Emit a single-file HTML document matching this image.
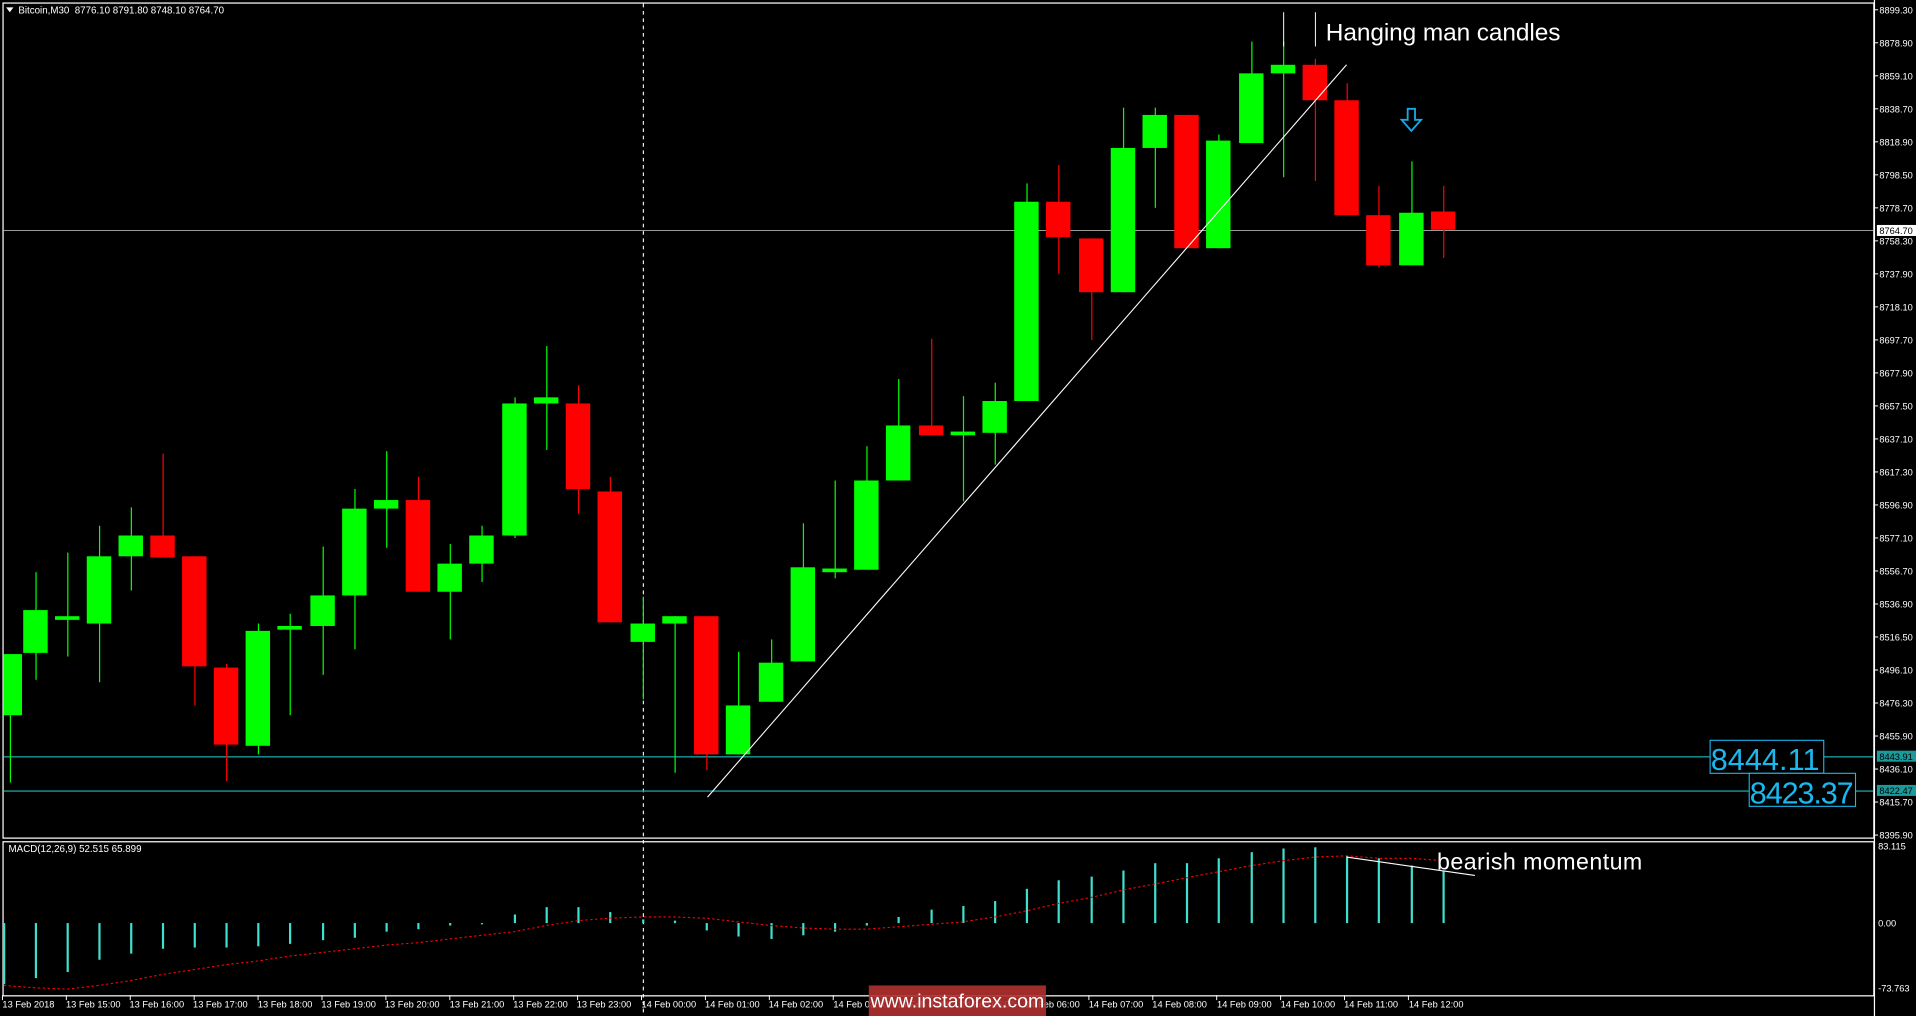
<!DOCTYPE html>
<html><head><meta charset="utf-8"><style>
html,body{margin:0;padding:0;background:#000;width:1916px;height:1016px;overflow:hidden}
svg{display:block}
text{font-family:"Liberation Sans",sans-serif}
</style></head><body>
<svg id="s" width="1916" height="1016" viewBox="0 0 1568 831" preserveAspectRatio="none" xmlns="http://www.w3.org/2000/svg">
<rect width="1568" height="831" fill="#000"/>
<rect x="2.5" y="2.5" width="1531" height="683" fill="none" stroke="#fff" stroke-width="1"/>
<rect x="2.5" y="688.5" width="1531" height="126" fill="none" stroke="#fff" stroke-width="1"/>
<line x1="526.5" y1="3" x2="526.5" y2="831" stroke="#fff" stroke-width="0.9" stroke-dasharray="3,3"/>
<line x1="3" y1="188.5" x2="1533" y2="188.5" stroke="#9a9a9a" stroke-width="0.8"/>
<line x1="3" y1="619" x2="1533" y2="619" stroke="#1a9a9a" stroke-width="1.1"/>
<line x1="3" y1="647" x2="1533" y2="647" stroke="#1a9a9a" stroke-width="1.1"/>
<g id="candles"></g>
<g id="hist"></g>
<polyline id="sig" fill="none" stroke="#ff0000" stroke-width="0.9" stroke-dasharray="2,2"/>
<line x1="579" y1="652" x2="1102" y2="53" stroke="#fff" stroke-width="0.9"/>
<line x1="1102" y1="701" x2="1207" y2="716" stroke="#fff" stroke-width="0.9"/>
<line x1="1050.5" y1="10" x2="1050.5" y2="38" stroke="#fff" stroke-width="0.8"/>
<line x1="1076.5" y1="10" x2="1076.5" y2="38" stroke="#fff" stroke-width="0.8"/>
<text x="1085" y="33" fill="#fff" font-size="20" textLength="192">Hanging man candles</text>
<text x="1176" y="711" fill="#fff" font-size="19" textLength="168">bearish momentum</text>
<path d="M1152,89 h6 v9 h5 l-8,9 l-8,-9 h5 z" fill="none" stroke="#19a8e8" stroke-width="1.5"/>
<path d="M5,6 h6 l-3,4 z" fill="#fff"/>
<text x="15" y="11" fill="#fff" font-size="8">Bitcoin,M30&#160; 8776.10 8791.80 8748.10 8764.70</text>
<text x="7" y="697" fill="#fff" font-size="8">MACD(12,26,9) 52.515 65.899</text>
<rect x="1399.5" y="605.5" width="93" height="27" fill="#000" stroke="#19b8f0" stroke-width="0.9"/>
<text x="1400" y="630" fill="#19b8f0" font-size="25" textLength="89">8444.11</text>
<rect x="1431.5" y="632.5" width="87" height="27" fill="#000" stroke="#19b8f0" stroke-width="0.9"/>
<text x="1432" y="657" fill="#19b8f0" font-size="25" textLength="85">8423.37</text>
<line x1="1534" y1="0" x2="1534" y2="831" stroke="#fff" stroke-width="1"/>
<g id="ax" fill="#fff" font-size="7.6"></g>
<rect x="1536" y="184" width="32" height="9" fill="#fff"/>
<text x="1538" y="191.5" fill="#000" font-size="7.6">8764.70</text>
<rect x="1536" y="614" width="32" height="9" fill="#1a9a9a"/>
<text x="1538" y="621.5" fill="#000" font-size="7.6">8443.91</text>
<rect x="1536" y="642" width="32" height="9" fill="#1a9a9a"/>
<text x="1538" y="649.5" fill="#000" font-size="7.6">8422.47</text>
<text x="1537" y="695" fill="#fff" font-size="7.6">83.115</text>
<text x="1537" y="758" fill="#fff" font-size="7.6">0.00</text>
<text x="1537" y="811" fill="#fff" font-size="7.6">-73.763</text>
<g fill="#fff" font-size="7.6">
<text x="2" y="824">13 Feb 2018</text>
<text x="54" y="824">13 Feb 15:00</text>
<text x="106" y="824">13 Feb 16:00</text>
<text x="158" y="824">13 Feb 17:00</text>
<text x="211" y="824">13 Feb 18:00</text>
<text x="263" y="824">13 Feb 19:00</text>
<text x="315" y="824">13 Feb 20:00</text>
<text x="368" y="824">13 Feb 21:00</text>
<text x="420" y="824">13 Feb 22:00</text>
<text x="472" y="824">13 Feb 23:00</text>
<text x="525" y="824">14 Feb 00:00</text>
<text x="577" y="824">14 Feb 01:00</text>
<text x="629" y="824">14 Feb 02:00</text>
<text x="682" y="824">14 Feb 03:00</text>
<text x="734" y="824">14 Feb 04:00</text>
<text x="786" y="824">14 Feb 05:00</text>
<text x="839" y="824">14 Feb 06:00</text>
<text x="891" y="824">14 Feb 07:00</text>
<text x="943" y="824">14 Feb 08:00</text>
<text x="996" y="824">14 Feb 09:00</text>
<text x="1048" y="824">14 Feb 10:00</text>
<text x="1100" y="824">14 Feb 11:00</text>
<text x="1153" y="824">14 Feb 12:00</text>
</g>
<rect x="711" y="806" width="145" height="25" fill="#b03030" opacity="0.9"/>
<text x="783.5" y="824" fill="#fff" font-size="16" text-anchor="middle">www.instaforex.com</text>
</svg>
<script>
var NS="http://www.w3.org/2000/svg";
function el(p,t,a){var e=document.createElementNS(NS,t);for(var k in a)e.setAttribute(k,a[k]);p.appendChild(e);return e;}
var C=[[8,535,585,535,640,'g'],[29,499,534,468,556,'g'],[55,504,506,452,537,'g'],[81,455,510,430,558,'g'],[107,438,455,415,483,'g'],[133,438,456,371,456,'r'],[159,455,545,455,577,'r'],[185,546,609,543,639,'r'],[211,516,610,510,617,'g'],[237,512,515,502,585,'g'],[264,487,512,447,552,'g'],[290,416,487,400,531,'g'],[316,409,416,369,448,'g'],[342,409,484,390,484,'r'],[368,461,484,445,523,'g'],[394,438,461,430,476,'g'],[421,330,438,325,440,'g'],[447,325,330,283,368,'g'],[473,330,400,315,420,'r'],[499,402,509,390,509,'r'],[526,510,525,488,572,'g'],[552,504,510,504,632,'g'],[578,504,617,504,630,'r'],[604,577,617,533,617,'g'],[631,542,574,523,574,'g'],[657,464,541,428,541,'g'],[683,465,468,393,473,'g'],[709,393,466,365,466,'g'],[735,348,393,310,393,'g'],[762,348,356,277,356,'r'],[788,353,356,324,410,'g'],[814,328,354,313,380,'g'],[840,165,328,150,328,'g'],[866,165,194,135,224,'r'],[893,195,239,195,278,'r'],[919,121,239,88,239,'g'],[945,94,121,88,170,'g'],[971,94,203,94,203,'r'],[997,115,203,110,203,'g'],[1024,60,117,34,117,'g'],[1050,53,60,34,145,'g'],[1076,53,82,48,148,'r'],[1102,82,176,68,176,'r'],[1128,176,217,152,219,'r'],[1155,174,217,132,217,'g'],[1181,173,188,152,211,'r']];
var g=document.getElementById('candles');
C.forEach(function(c){var col=c[5]=='g'?'#00ff00':'#ff0000';
el(g,'line',{x1:c[0]+.5,x2:c[0]+.5,y1:c[3],y2:c[4],stroke:col,'stroke-width':1});
var x0=c[0]-10;if(x0<3)x0=3;
el(g,'rect',{x:x0,y:c[1],width:c[0]+10-x0,height:Math.max(c[2]-c[1],3),fill:col});});
var H=[[3,805],[29,800],[55,795],[81,785],[107,780],[133,776],[159,775],[185,775],[211,774],[237,772],[264,769],[290,767],[316,762],[342,760],[368,757],[394,755],[421,748],[447,742],[473,742],[499,746],[526,752],[552,753],[578,761],[604,766],[631,768],[657,765],[683,762],[709,757],[735,750],[762,744],[788,741],[814,737],[840,727],[866,720],[893,717],[919,712],[945,706],[971,706],[997,702],[1024,697],[1050,694],[1076,693],[1102,700],[1128,702],[1155,708],[1181,712]];
var h=document.getElementById('hist');
H.forEach(function(b){el(h,'rect',{x:b[0]-0.5,y:Math.min(755,b[1]),width:1.8,height:Math.abs(b[1]-755)||1,fill:'#40e0d0'});});
document.getElementById('sig').setAttribute('points','3,806 30,808 55,809 81,806 107,802 133,797 159,793 185,789 211,786 237,782 264,779 290,776 316,773 342,771 368,768 394,765 421,762 447,757 473,753 499,751 526,750 552,750 578,751 604,754 631,757 657,759 683,760 709,760 735,758 762,756 788,754 814,750 840,745 866,739 893,734 919,728 945,723 971,718 997,713 1024,708 1050,704 1076,701 1102,700 1128,702 1155,702 1181,704');
var L=['8899.30','8878.90','8859.10','8838.70','8818.90','8798.50','8778.70','8758.30','8737.90','8718.10','8697.70','8677.90','8657.50','8637.10','8617.30','8596.90','8577.10','8556.70','8536.90','8516.50','8496.10','8476.30','8455.90','8436.10','8415.70','8395.90'];
var ax=document.getElementById('ax');
L.forEach(function(t,i){var y=8+27*i;el(ax,'line',{x1:1534,x2:1537,y1:y,y2:y,stroke:'#fff','stroke-width':0.8});var e=el(ax,'text',{x:1538,y:y+3});e.textContent=t;});
for(var i=0;i<23;i++){var x=2+52.3*i;el(ax,'line',{x1:x,x2:x,y1:814,y2:818,stroke:'#fff','stroke-width':0.8});}
</script>
</body></html>
